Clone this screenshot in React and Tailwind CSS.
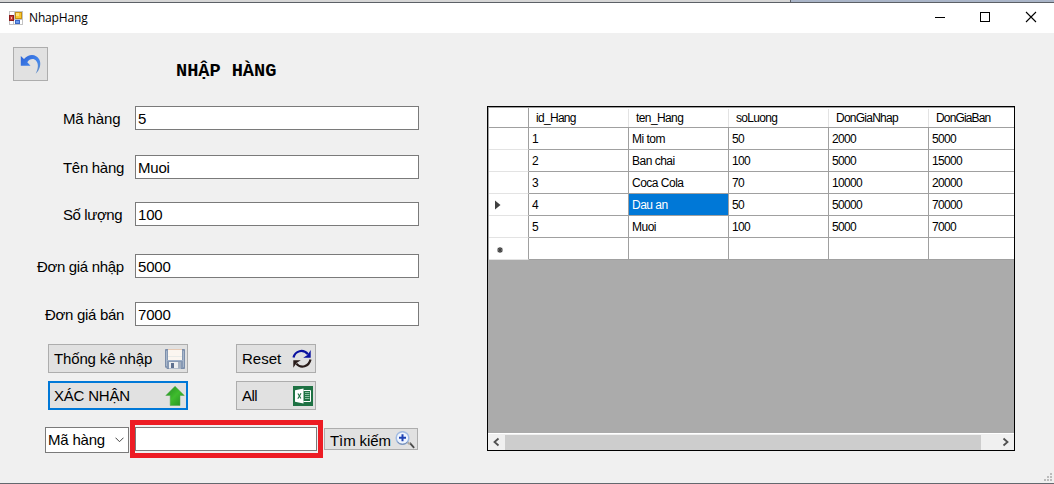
import React from "react";

const fields = [
  { label: "Mã hàng", value: "5", row: "mt-0", pad: "pl-[63px]", spacing: "tracking-[-0.15px]" },
  { label: "Tên hàng", value: "Muoi", row: "mt-[25px]", pad: "pl-[63px]", spacing: "tracking-[-0.3px]" },
  { label: "Số lượng", value: "100", row: "mt-[23px]", pad: "pl-[63px]", spacing: "tracking-[-0.4px]" },
  { label: "Đơn giá nhập", value: "5000", row: "mt-[28px]", pad: "pl-[37px]", spacing: "tracking-[-0.33px]" },
  { label: "Đơn giá bán", value: "7000", row: "mt-[24px]", pad: "pl-[45px]", spacing: "tracking-[-0.3px]" },
];

const columns = [
  { name: "id_Hang", style: "tracking-[-0.7px]" },
  { name: "ten_Hang", style: "tracking-[-0.6px]" },
  { name: "soLuong", style: "tracking-[-0.7px]" },
  { name: "DonGiaNhap", style: "tracking-[-0.75px]" },
  { name: "DonGiaBan", style: "tracking-[-0.85px]" },
];
const rows = [
  ["1", "Mi tom", "50", "2000", "5000"],
  ["2", "Ban chai", "100", "5000", "15000"],
  ["3", "Coca Cola", "70", "10000", "20000"],
  ["4", "Dau an", "50", "50000", "70000"],
  ["5", "Muoi", "100", "5000", "7000"],
  ["", "", "", "", ""],
];

function AppIcon() {
  return (
    <svg width="14" height="14" viewBox="0 0 14 14" shapeRendering="crispEdges">
      <rect width="14" height="14" fill="#c3c3c3" />
      <path d="M1 1h4v3H1zM1 10h3v3H1zM5 9h8v4H5z" fill="#fff" />
      <rect x="0" y="4" width="5" height="6" fill="#8e1b1b" />
      <rect x="1" y="5" width="3" height="4" fill="#c63b32" />
      <rect x="2" y="6" width="1" height="2" fill="#f7b0a0" />
      <rect x="6" y="1" width="7" height="7" fill="#c99010" />
      <rect x="7" y="2" width="5" height="5" fill="#f8c830" />
      <rect x="7" y="2" width="3" height="3" fill="#ffe27a" />
      <rect x="6" y="9" width="5" height="4" fill="#3b68c4" />
      <rect x="7" y="10" width="3" height="2" fill="#6e9cf0" />
    </svg>
  );
}

function UndoIcon() {
  return (
    <svg width="22" height="22" viewBox="0 0 22 22">
      <defs>
        <linearGradient id="undo" x1="0" y1="0" x2="1" y2="1">
          <stop offset="0" stopColor="#2d62d6" />
          <stop offset="0.6" stopColor="#4386ec" />
          <stop offset="1" stopColor="#6c8eb8" />
        </linearGradient>
      </defs>
      <path d="M.8 3v9.800h9.700L7.300 9.300C9.500 6 13.500 4.800 16.300 8c2.400 3 2 7.500-.6 12.800 4-3.400 5.900-9.800 3.600-14.200C16.200.8 9 .5 4 5.900z" fill="url(#undo)" />
    </svg>
  );
}

function FloppyIcon() {
  return (
    <svg width="20" height="20" viewBox="0 0 20 20">
      <path d="M.5.500h19v19H2L.5 18z" fill="#8799b4" stroke="#7c8eaa" />
      <path d="M1.500 2v15M18.500 2v16" stroke="#a8b7cb" />
      <rect x="3" y="0" width="14" height="11" fill="#fbf6f0" />
      <path d="M3 .5h14" stroke="#e6c9b4" />
      <path d="M3 7.500h14" stroke="#e9ebe8" />
      <path d="M2 11.500h16" stroke="#9fb0c8" />
      <rect x="4" y="13" width="12" height="6.500" fill="#eceef0" />
      <rect x="6" y="14" width="3" height="5" fill="#5f7190" />
      <rect x="13" y="13" width="3" height="6.500" fill="#a3afc0" />
    </svg>
  );
}

function RefreshIcon() {
  return (
    <svg width="20" height="20" viewBox="0 0 20 20">
      <path d="M1.500 8.500C3.200 1.700 11 -.4 16 5.200" fill="none" stroke="#0b12a0" strokeWidth="2.200" />
      <path d="M18.700 1v7.700H11.200l4.300-2.800z" fill="#0b12a0" />
      <path d="M18.500 10.500C17 17.600 9 20 4.300 14.600" fill="none" stroke="#291c1a" strokeWidth="2.200" />
      <path d="M1.300 18.700V11.300h7.500L4.500 14z" fill="#291c1a" />
    </svg>
  );
}

function UpArrowIcon() {
  return (
    <svg width="20" height="20" viewBox="0 0 20 20">
      <defs>
        <linearGradient id="up" x1="0" y1="0" x2="1" y2="1">
          <stop offset="0" stopColor="#228b22" />
          <stop offset="0.500" stopColor="#3fbc2d" />
          <stop offset="1" stopColor="#218c22" />
        </linearGradient>
      </defs>
      <path d="M10 .3 19.300 9.500H15V19.500H5.200V9.500H.8z" fill="url(#up)" stroke="#4da24a" strokeWidth=".5" />
    </svg>
  );
}

function ExcelIcon() {
  return (
    <svg width="20" height="20" viewBox="0 0 20 20">
      <rect width="20" height="20" fill="#1f7244" />
      <path d="M2 4.300 10.500 2.500v15L2 15.700z" fill="#fff" />
      <path d="M10.500 4.500H17.500v11h-7" fill="none" stroke="#fff" strokeWidth="1" />
      <path d="M12 6.500h4.500M12 8.500h4.500M12 10.500h4.500M12 12.500h4.500" stroke="#a7d3b9" strokeWidth=".8" />
      <path d="m4.900 7.500 3 5M8 7.200l-3.200 5.500" stroke="#1f7244" strokeWidth="1.100" />
    </svg>
  );
}

function SearchIcon() {
  return (
    <svg className="mt-px" width="20" height="18" viewBox="0 0 20 18">
      <path d="m14 12.500 1.500-1.200 4.300 4.900-1.300 1.200z" fill="#4a4a4a" />
      <path d="m12.300 11 2.500 2.300" stroke="#b0a89e" strokeWidth="2.200" />
      <circle cx="7.500" cy="7" r="6.300" fill="#eff5fe" stroke="#a3bce2" strokeWidth="1.500" />
      <path d="M2.500 11a6.500 6.500 0 0 0 10 0" fill="none" stroke="#6f87ae" strokeWidth="1" />
      <path d="M7.500 3.200v7M4 6.700h7" stroke="#1f43b4" strokeWidth="2" />
    </svg>
  );
}

function TitleBar() {
  return (
    <header className="flex h-[30px] items-center bg-white pl-[9px]">
      <AppIcon />
      <span className="ml-[6px] font-['Open_Sans',sans-serif] text-[12px] leading-[16px] tracking-[-0.15px]">NhapHang</span>
      <div className="ml-auto flex h-full items-center">
        <svg width="119" height="30" viewBox="0 0 119 30" fill="none" stroke="#000" shapeRendering="crispEdges">
          <path d="M0 14.500h10" />
          <rect x="45.500" y="9.500" width="9" height="9" />
          <path d="m91 9 10 10M101 9 91 19" shapeRendering="auto" strokeWidth="1.100" />
        </svg>
      </div>
    </header>
  );
}

function Button({ children, icon, className }) {
  return (
    <button className={`flex items-center justify-between border bg-[#e1e1e1] text-left whitespace-nowrap ${className}`}>
      <span>{children}</span>
      {icon}
    </button>
  );
}

function FormPanel() {
  return (
    <section className="w-[487px] shrink-0 text-[15px] leading-[18px]">
      <div className="flex h-[73px] pt-[14px] pl-[13px]">
        <button className="flex h-[34px] w-[35px] items-center justify-center border border-[#adadad] bg-[#e1e1e1]">
          <UndoIcon />
        </button>
        <h1 className="mt-[14px] ml-[128px] font-['Liberation_Mono',monospace] text-[18.67px] leading-[20px] font-bold tracking-[-0.05px] whitespace-pre">NHẬP HÀNG</h1>
      </div>
      {fields.map((f) => (
        <div key={f.label} className={`flex h-6 ${f.row}`}>
          <label className={`w-[135px] shrink-0 pt-[4px] whitespace-nowrap ${f.pad} ${f.spacing}`}>{f.label}</label>
          <div className="w-[284px] border border-[#7a7a7a] bg-white pt-[3px] pl-[2px] tracking-[-0.2px]">{f.value}</div>
        </div>
      ))}
      <div className="mt-[18px] grid grid-cols-[140px_80px] gap-x-[48px] gap-y-2 pl-[48px]">
        <Button icon={<FloppyIcon />} className="h-[29px] border-[#adadad] pr-[2px] pl-[5px] tracking-[-0.15px]">Thống kê nhập</Button>
        <Button icon={<RefreshIcon />} className="h-[29px] border-[#adadad] pr-[3px] pl-[5px]">Reset</Button>
        <Button icon={<UpArrowIcon />} className="h-[29px] border-2 border-[#0078d7] pr-[1px] pl-[4px] tracking-[-0.2px]">XÁC NHẬN</Button>
        <Button icon={<ExcelIcon />} className="h-[29px] border-[#adadad] pr-[2px] pl-[5px] tracking-[-0.5px]">All</Button>
      </div>
      <div className="mt-[10px] flex pl-[45px]">
        <div className="mt-[7px] flex h-[26px] w-[84px] items-center justify-between border border-[#7a7a7a] bg-white pr-[4px] pl-[2px]">
          <span className="tracking-[-0.2px] whitespace-nowrap">Mã hàng</span>
          <svg width="9" height="6" viewBox="0 0 9 6" fill="none" stroke="#444"><path d="m.5.7 4 4 4-4" /></svg>
        </div>
        <div className="ml-px h-[38px] w-[193px] border-5 border-[#ed1c24] pt-[2px] pr-px">
          <div className="h-6 border border-[#7a7a7a] bg-white" />
        </div>
        <Button icon={<SearchIcon />} className="mt-2 ml-px h-[22px] w-[94px] border-[#adadad] pr-[2px] pl-[5px] tracking-[-0.1px] [&>span]:translate-y-[2px]">Tìm kiếm</Button>
      </div>
    </section>
  );
}

function DataGrid() {
  return (
    <section className="mt-[73px] flex h-[345px] w-[528px] flex-col border border-black bg-[#ababab] text-[12px] leading-[14px]">
      <div className="w-full overflow-hidden border-t border-l border-[#a0a0a0] bg-white">
        <div className="flex w-[540px]">
          <div className="h-5 w-10 shrink-0 border-r border-b border-[#a0a0a0]" />
          {columns.map((c) => (
            <div key={c.name} className="flex h-5 w-[100px] shrink-0 border-b border-[#a0a0a0]">
              <span className={`w-[99px] pt-[3px] pl-[7px] ${c.style}`}>{c.name}</span>
              <i className="mt-px h-[18px] w-px bg-[#e3e3e3]" />
            </div>
          ))}
        </div>
        {rows.map((row, i) => (
          <div key={i} className="flex w-[540px]">
            <div className="flex h-[22px] w-10 shrink-0 items-center border-r border-r-[#a0a0a0] border-b border-b-[#e3e3e3]">
              {i === 3 && <svg className="mt-px ml-[6px]" width="6" height="10" viewBox="0 0 6 10"><path d="M0 .5v9L5.500 5z" fill="#404040" /></svg>}
              {i === 5 && <svg className="mt-[3px] ml-[8px]" width="6" height="6" viewBox="0 0 6 6"><path d="M3 0v6M0 3h6M.8.8l4.400 4.400M5.200.8.800 5.200" stroke="#404040" strokeWidth="1.200" /></svg>}
            </div>
            {row.map((cell, j) => (
              <div key={j} className={`h-[22px] w-[100px] shrink-0 border-r border-b border-[#a0a0a0] pt-[4px] pl-[3px] ${j === 1 ? "tracking-[-0.5px]" : "tracking-[-0.65px]"} ${i === 3 && j === 1 ? "bg-[#0078d7] text-white" : ""}`}>{cell}</div>
            ))}
          </div>
        ))}
      </div>
      <div className="mt-auto flex h-[17px] items-center border-t border-white bg-[#f0f0f0]">
        <svg width="17" height="16" viewBox="0 0 17 16" fill="none" stroke="#505050" strokeWidth="1.800"><path d="m10.500 4.500-4 3.500 4 3.500" /></svg>
        <div className="h-[15px] w-[476px] bg-[#cdcdcd]" />
        <svg className="ml-auto" width="17" height="16" viewBox="0 0 17 16" fill="none" stroke="#505050" strokeWidth="1.800"><path d="m6.500 4.500 4 3.500-4 3.500" /></svg>
      </div>
    </section>
  );
}

export default function App() {
  return (
    <div className="flex h-[484px] w-[1054px] flex-col overflow-hidden bg-[#f0f0f0] font-['Liberation_Sans',Arial,sans-serif] text-black">
      <div className="flex h-[3px] shrink-0 border-b border-[#5c6066]">
        <div className="w-[791px] border-r border-[#5c6066] bg-[#d6d6d6]" />
        <div className="flex-1 bg-[#aab5c8]" />
      </div>
      <TitleBar />
      <main className="flex flex-1 border-b border-[#63686e]">
        <FormPanel />
        <DataGrid />
        <div className="flex flex-1 items-end justify-end pr-[2px] pb-[2px]">
          <svg width="8" height="8" viewBox="0 0 8 8" fill="#bcbcbc"><path d="M6 0h2v2H6zM3 3h2v2H3zM6 3h2v2H6zM0 6h2v2H0zM3 6h2v2H3zM6 6h2v2H6z" /></svg>
        </div>
      </main>
    </div>
  );
}
